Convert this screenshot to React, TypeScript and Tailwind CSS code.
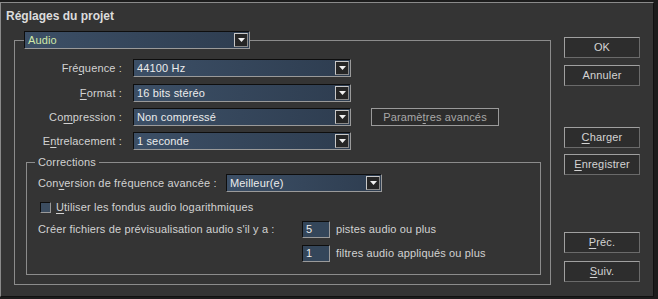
import type { ReactNode } from 'react';

const font = { fontFamily: '"Liberation Sans", Arial, sans-serif' };

function Arrow() {
  return (
    <div className="flex h-[14px] w-[14px] shrink-0 items-center justify-center border border-t-[#c8c8c8] border-l-[#c8c8c8] border-r-[#8a8a8a] border-b-[#8a8a8a] bg-[#262626]">
      <svg width="7" height="4" viewBox="0 0 7 4">
        <path d="M0 0 L7 0 L3.5 4 Z" fill="#f0f0f0" />
      </svg>
    </div>
  );
}

function Select({ value, width, green }: { value: string; width: string; green?: boolean }) {
  return (
    <div
      className={`flex h-[18px] ${width} items-center border border-t-[#0e0e0e] border-l-[#0e0e0e] border-r-[#9a9a9a] border-b-[#9a9a9a] bg-gradient-to-r from-[#3c4f66] to-[#2e3d50] pr-[1px]`}
    >
      <span className={`flex-1 truncate pl-[3px] text-[11px] leading-none ${green ? 'text-[#cfe8a8]' : 'text-[#ececec]'}`}>
        {value}
      </span>
      <Arrow />
    </div>
  );
}

function Btn({ children, className = '' }: { children: ReactNode; className?: string }) {
  return (
    <div
      className={`flex h-[21px] w-[76px] items-center justify-center border border-t-[#a0a0a0] border-l-[#a0a0a0] border-r-[#6a6a6a] border-b-[#6a6a6a] bg-[#2d2d2d] text-[11px] text-[#d4d4d4] ${className}`}
    >
      {children}
    </div>
  );
}

function Row({ label, value, extra }: { label: ReactNode; value: string; extra?: ReactNode }) {
  return (
    <div className="flex h-[18px] items-center">
      <div className="w-[107px] text-right text-[11px] text-[#d2d2d2]">{label}</div>
      <div className="ml-[11px]">
        <Select value={value} width="w-[218px]" />
      </div>
      {extra}
    </div>
  );
}

function NumBox({ v }: { v: string }) {
  return (
    <div className="flex h-[17px] w-[28px] items-center border border-t-[#0e0e0e] border-l-[#0e0e0e] border-r-[#9a9a9a] border-b-[#9a9a9a] bg-[#34465a] pl-[3px] text-[11px] text-[#ececec]">
      {v}
    </div>
  );
}

export default function App() {
  return (
    <div className="h-[299px] w-[658px] overflow-hidden bg-[#1c1c1c] pt-[2px] tracking-[0.15px]" style={font}>
      <div className="h-[295px] w-[654px] border border-t-[#8a8a8a] border-l-[#8a8a8a] border-r-[#111] border-b-[#111] bg-[#343434]">
        <div className="h-[28px] pl-[5px] pt-[4px] text-[12px] font-bold tracking-normal text-[#dcdcdc]">Réglages du projet</div>
        <div className="flex">
          <fieldset className="ml-[13px] h-[254px] w-[537px] border border-[#8c8c8c] p-0">
            <legend className="ml-[9px] p-0">
              <Select value="Audio" width="w-[226px]" green />
            </legend>
            <div className="mt-[10px] flex flex-col gap-[6px]">
              <Row label={<>Fré<u className="underline-offset-2">q</u>uence :</>} value="44100 Hz" />
              <div className="mt-[1px]">
                <Row label={<><u className="underline-offset-2">F</u>ormat :</>} value="16 bits stéréo" />
              </div>
              <Row
                label={<>Co<u className="underline-offset-2">m</u>pression :</>}
                value="Non compressé"
                extra={
                  <div className="ml-[20px] flex h-[18px] w-[128px] items-center justify-center border border-[#9a9a9a] bg-[#2d2d2d] text-[11px] text-[#a8a8a8]">
                    Paramè<u className="underline-offset-2">t</u>res avancés
                  </div>
                }
              />
              <Row label={<>E<u className="underline-offset-2">n</u>trelacement :</>} value="1 seconde" />
            </div>
            <fieldset className="ml-[11px] mt-[5px] h-[120px] w-[515px] border border-[#8c8c8c] p-0">
              <legend className="ml-[8px] px-[3px] text-[11px] leading-[14px] text-[#d2d2d2]">Corrections</legend>
              <div className="pl-[11px] pt-[5px] text-[11px] text-[#d2d2d2]">
                <div className="flex h-[18px] items-center">
                  <span className="w-[188px]">Con<u className="underline-offset-2">v</u>ersion de fréquence avancée :</span>
                  <Select value="Meilleur(e)" width="w-[156px]" />
                </div>
                <div className="mt-[10px] flex h-[11px] items-center pl-[2px]">
                  <div className="h-[11px] w-[11px] border border-t-[#0e0e0e] border-l-[#0e0e0e] border-r-[#9a9a9a] border-b-[#9a9a9a] bg-[#3c4d60]" />
                  <span className="ml-[5px]"><u className="underline-offset-2">U</u>tiliser les fondus audio logarithmiques</span>
                </div>
                <div className="mt-[8px] flex h-[17px] items-center">
                  <span className="w-[264px]">Créer fichiers de prévisualisation audio s'il y a :</span>
                  <NumBox v="5" />
                  <span className="ml-[6px]">pistes audio ou plus</span>
                </div>
                <div className="mt-[7px] flex h-[17px] items-center">
                  <span className="w-[264px]" />
                  <NumBox v="1" />
                  <span className="ml-[6px]">filtres audio appliqués ou plus</span>
                </div>
              </div>
            </fieldset>
          </fieldset>
          <div className="ml-[13px] flex flex-col pt-[6px]">
            <Btn>OK</Btn>
            <Btn className="mt-[7px]">Annuler</Btn>
            <Btn className="mt-[41px]"><u className="underline-offset-2">C</u>harger</Btn>
            <Btn className="mt-[6px]"><u className="underline-offset-2">E</u>nregistrer</Btn>
            <Btn className="mt-[57px]"><u className="underline-offset-2">P</u>réc.</Btn>
            <Btn className="mt-[8px]"><u className="underline-offset-2">S</u>uiv.</Btn>
          </div>
        </div>
      </div>
    </div>
  );
}
